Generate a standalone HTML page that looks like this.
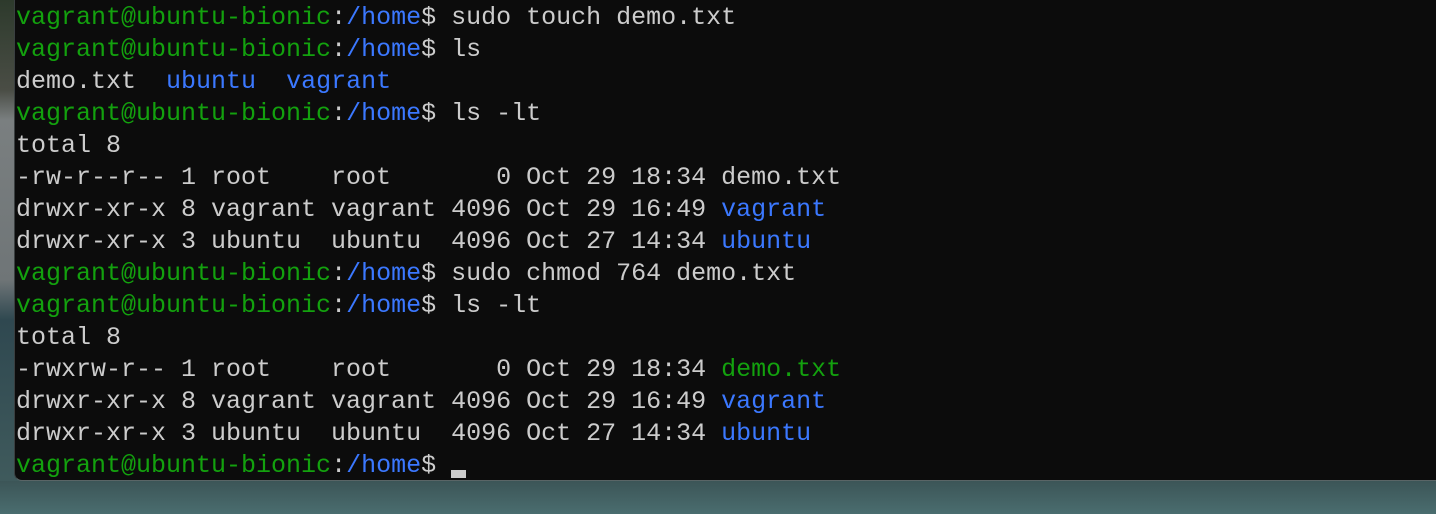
<!DOCTYPE html>
<html><head><meta charset="utf-8"><style>
html,body{margin:0;padding:0;width:1436px;height:514px;overflow:hidden;
background:linear-gradient(180deg,#2d3a2c 0px,#4a4d45 90px,#7a7f80 120px,#6f7577 280px,#2f4850 320px,#3f5a5c 480px,#4b6e70 514px);}
.term{position:absolute;left:14px;top:0;width:1430px;height:480px;background:#0c0c0c;border-bottom:1px solid #5a6566;border-left:1px solid #3a3f40;border-bottom-left-radius:8px;}
pre{margin:0;position:absolute;left:1px;top:2px;font-family:"Liberation Mono","DejaVu Sans Mono",monospace;font-size:25px;line-height:32px;color:#cccccc;}
.g{color:#13a10e}.b{color:#3b78ff}
.cur{display:inline-block;width:15px;height:8px;background:#cccccc;vertical-align:-6px}
.bot{position:absolute;left:0;top:481px;width:1436px;height:33px;background:linear-gradient(180deg,#3c5557,#4a6d6f);}
</style></head><body>
<div class="bot"></div>
<div class="term"><pre><span class="g">vagrant@ubuntu-bionic</span>:<span class="b">/home</span>$ sudo touch demo.txt
<span class="g">vagrant@ubuntu-bionic</span>:<span class="b">/home</span>$ ls
demo.txt  <span class="b">ubuntu</span>  <span class="b">vagrant</span>
<span class="g">vagrant@ubuntu-bionic</span>:<span class="b">/home</span>$ ls -lt
total 8
-rw-r--r-- 1 root    root       0 Oct 29 18:34 demo.txt
drwxr-xr-x 8 vagrant vagrant 4096 Oct 29 16:49 <span class="b">vagrant</span>
drwxr-xr-x 3 ubuntu  ubuntu  4096 Oct 27 14:34 <span class="b">ubuntu</span>
<span class="g">vagrant@ubuntu-bionic</span>:<span class="b">/home</span>$ sudo chmod 764 demo.txt
<span class="g">vagrant@ubuntu-bionic</span>:<span class="b">/home</span>$ ls -lt
total 8
-rwxrw-r-- 1 root    root       0 Oct 29 18:34 <span class="g">demo.txt</span>
drwxr-xr-x 8 vagrant vagrant 4096 Oct 29 16:49 <span class="b">vagrant</span>
drwxr-xr-x 3 ubuntu  ubuntu  4096 Oct 27 14:34 <span class="b">ubuntu</span>
<span class="g">vagrant@ubuntu-bionic</span>:<span class="b">/home</span>$ <span class="cur"></span></pre></div>
</body></html>
